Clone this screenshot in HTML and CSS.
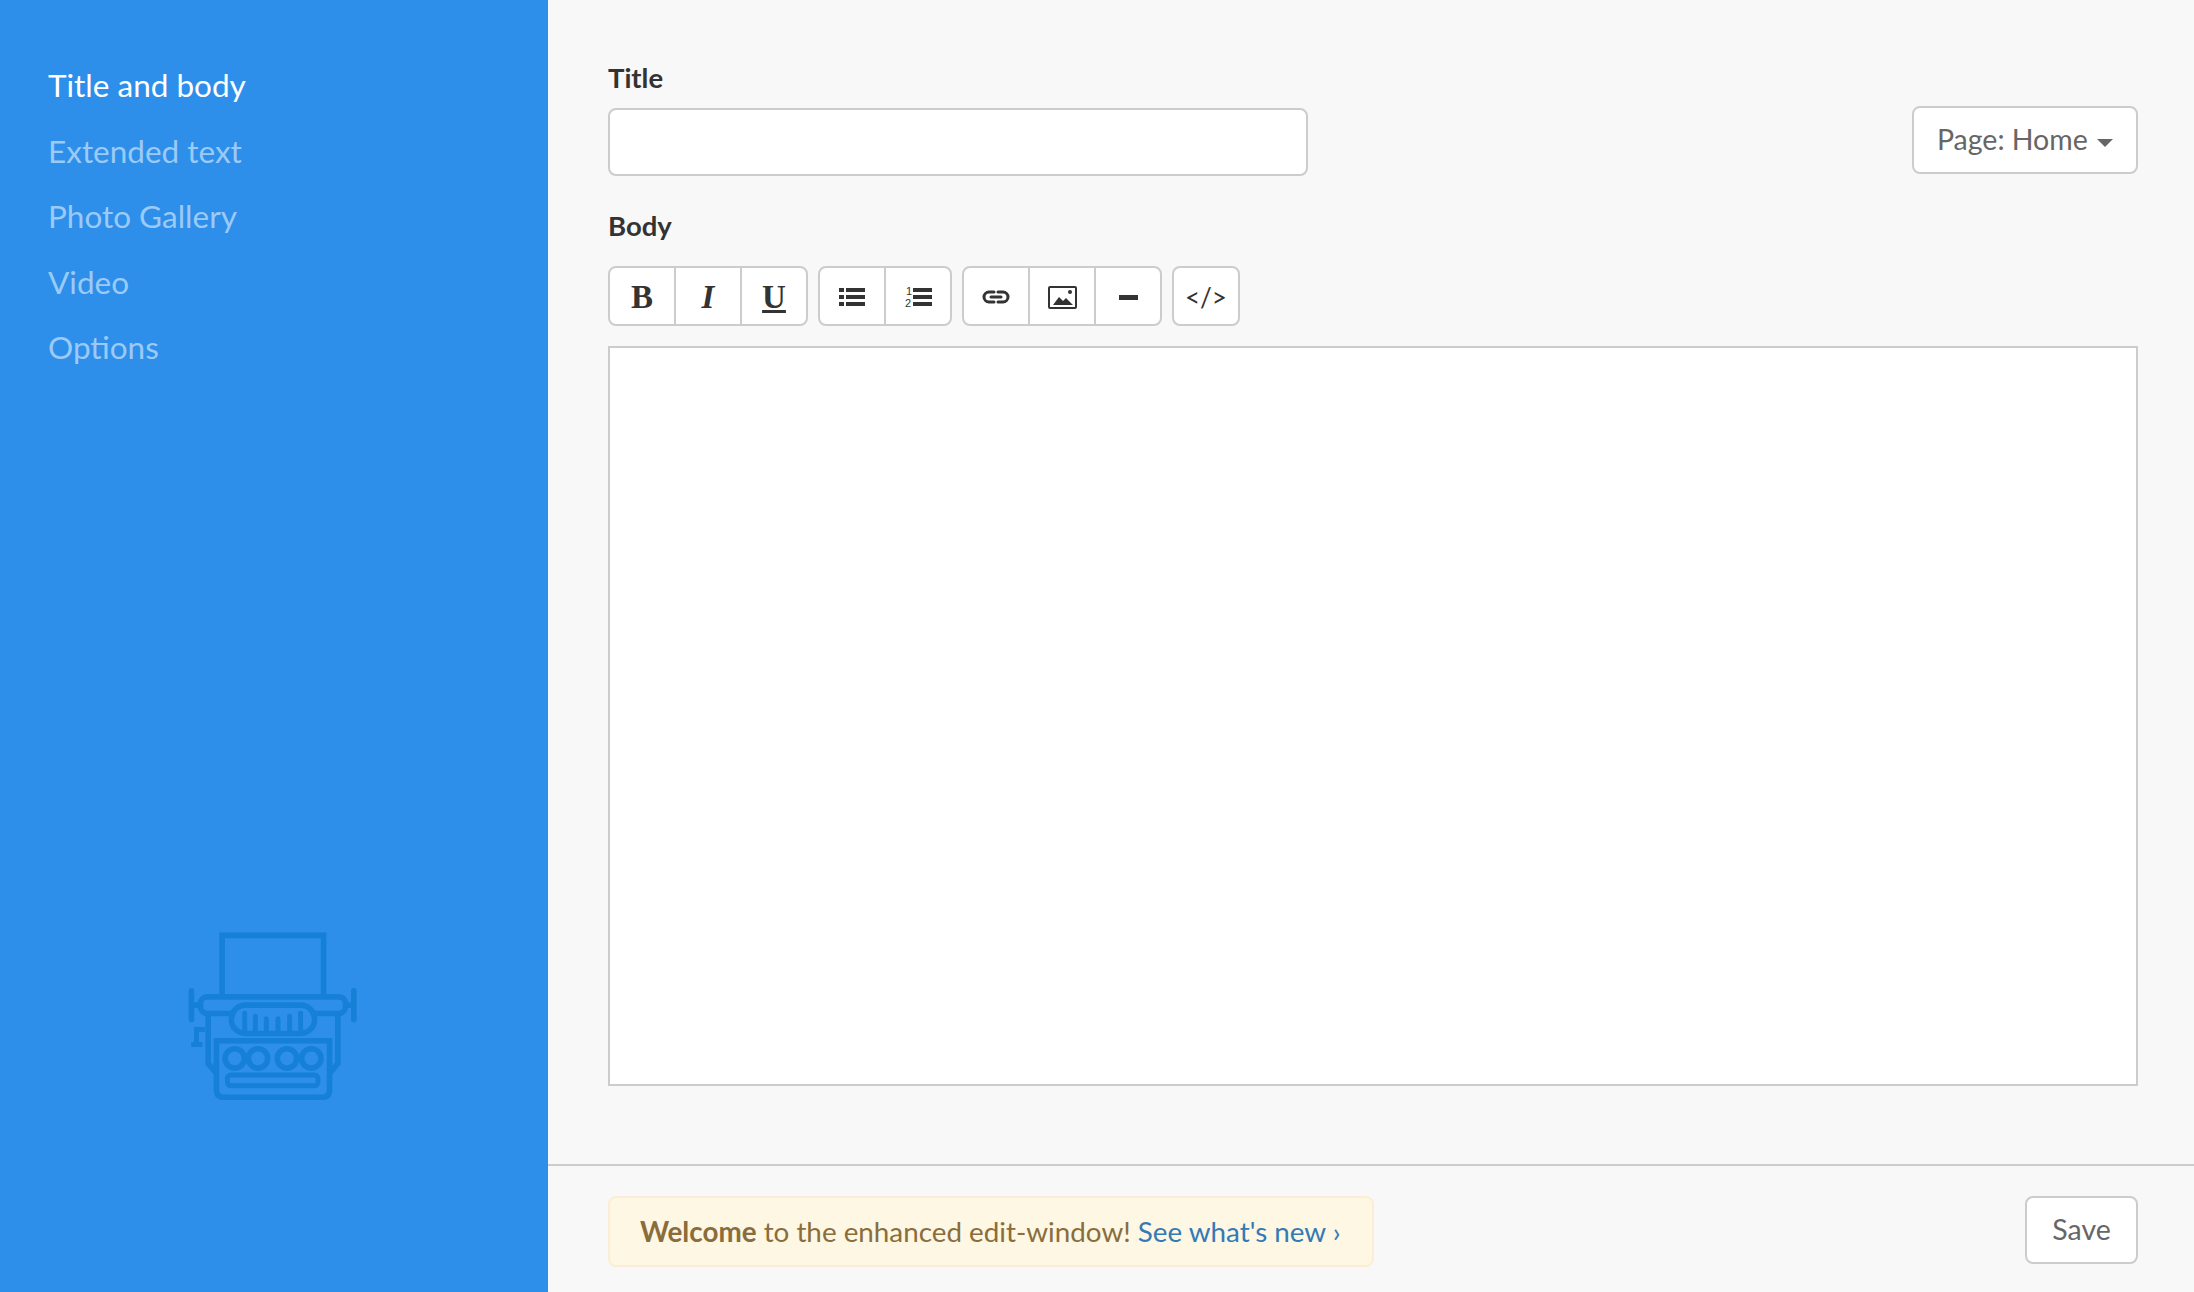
FILE: index.html
```html
<!DOCTYPE html>
<html>

<head>
    <title>Edit</title>
    <link rel="stylesheet" href="styles.css">
</head>

<body>
    <aside class="sidebar">
        <nav class="side-nav">
            <a class="side-link active" href="#">Title and body</a>
            <a class="side-link" href="#">Extended text</a>
            <a class="side-link" href="#">Photo Gallery</a>
            <a class="side-link" href="#">Video</a>
            <a class="side-link" href="#">Options</a>
        </nav>
        <svg class="typewriter" viewBox="85 65 507 505" width="169" height="168" fill="none" stroke="#1580d6" stroke-width="17">
            <path d="M187 255V75H492V255" />
            <rect x="122" y="260" width="436" height="50" rx="20" />
            <path d="M95 242V328M583 242V328" stroke-linecap="round" />
            <path d="M95 285H122M558 285H583" />
            <path d="M145 310V460L170 490M535 310V460L510 490" />
            <path d="M135 358H110V403M94 403H128" stroke-width="15" />
            <rect x="215" y="285" width="250" height="85" rx="42" fill="#2d8fea" />
            <path d="M255 309V366M287 318V366M320 326V366M355 326V366M390 318V366M423 309V366" stroke-width="15" stroke-linecap="round" />
            <path d="M170 392H510V540Q510 562 488 562H192Q170 562 170 540Z" fill="#2d8fea" />
            <circle cx="225" cy="445" r="29" />
            <circle cx="295" cy="445" r="29" />
            <circle cx="382" cy="445" r="29" />
            <circle cx="455" cy="445" r="29" />
            <rect x="203" y="495" width="272" height="32" rx="10" stroke-width="15" />
        </svg>
    </aside>

    <main class="main">
        <section class="content">
            <div class="top-row">
                <div class="title-field">
                    <label class="field-label" for="title">Title</label>
                    <input id="title" class="title-input" type="text" />
                </div>
                <button class="btn page-btn">Page: Home <span class="caret"></span></button>
            </div>

            <label class="field-label body-label" for="body">Body</label>
            <div class="toolbar">
                <div class="tool-group">
                    <button class="tool tool-b">B</button>
                    <button class="tool tool-i">I</button>
                    <button class="tool tool-u">U</button>
                </div>
                <div class="tool-group">
                    <button class="tool" title="Bullets">
                        <svg width="26" height="20" viewBox="0 0 26 20" fill="#333">
                            <path d="M0 1h5v4H0zM0 8h5v4H0zM0 15h5v4H0zM7 1h19v4H7zM7 8h19v4H7zM7 15h19v4H7z" />
                        </svg>
                    </button>
                    <button class="tool" title="Numbers">
                        <svg width="27" height="22" viewBox="0 0 27 22" fill="#333">
                            <text class="num" x="1" y="9">1</text>
                            <text class="num" x="0" y="21">2</text>
                            <path d="M8 2h19v4H8zM8 9h19v4H8zM8 16h19v4H8z" />
                        </svg>
                    </button>
                </div>
                <div class="tool-group">
                    <button class="tool" title="Link">
                        <svg width="28" height="14" viewBox="0 0 28 14" fill="none" stroke="#333" stroke-width="3" stroke-linecap="round">
                            <path d="M12 2H7a5 5 0 0 0 0 10h5M16 2h5a5 5 0 0 1 0 10h-5M9 7h10" />
                        </svg>
                    </button>
                    <button class="tool" title="Image">
                        <svg width="29" height="23" viewBox="0 0 29 23">
                            <rect x="1" y="1" width="27" height="21" rx="1" fill="none" stroke="#333" stroke-width="2" />
                            <path d="M5 19l6-8 4 4 3-3 7 7z" fill="#333" />
                            <circle cx="22" cy="6" r="2" fill="#333" />
                        </svg>
                    </button>
                    <button class="tool" title="Rule">
                        <span class="rule-icon"></span>
                    </button>
                </div>
                <div class="tool-group">
                    <button class="tool tool-code">&lt;/&gt;</button>
                </div>
            </div>
            <textarea id="body" class="body-input"></textarea>
        </section>

        <footer class="footer">
            <div class="notice"><b>Welcome</b> to the enhanced edit-window! <a href="#">See what's new ›</a></div>
            <button class="btn save-btn">Save</button>
        </footer>
    </main>
</body>

</html>
```

FILE: styles.css
```css
html {
    --blue: #2d8fea;
    --line: #cccccc;
}

* {
    box-sizing: border-box;
}

body {
    margin: 0;
    height: 1292px;
    display: flex;
    overflow: hidden;
    background: #f8f8f8;
    color: #333;
    font-family: "Lato", "Liberation Sans", sans-serif;
}

.sidebar {
    width: 548px;
    flex-shrink: 0;
    display: flex;
    flex-direction: column;
    padding: 53px 0 192px 48px;
    background: var(--blue);
}

.side-nav {
    display: flex;
    flex-direction: column;
}

.side-link {
    height: 65.5px;
    line-height: 65.5px;
    font-size: 31.5px;
    color: #9ccaf6;
    text-decoration: none;
}

.side-link.active {
    color: #fff;
}

.typewriter {
    margin-top: auto;
    margin-left: 140px;
}

.main {
    flex: 1;
    display: flex;
    flex-direction: column;
}

.content {
    height: 1164px;
    padding: 60px 56px 0 60px;
}

.top-row {
    display: flex;
    justify-content: space-between;
}

.title-field {
    width: 700px;
}

.field-label {
    display: block;
    height: 36px;
    line-height: 36px;
    font-size: 27.5px;
    font-weight: 700;
}

.title-input {
    display: block;
    width: 100%;
    height: 68px;
    margin-top: 12px;
    border: 2px solid var(--line);
    border-radius: 8px;
    background: #fff;
}

.btn {
    height: 68px;
    padding: 0 0 2px;
    border: 2px solid var(--line);
    border-radius: 8px;
    background: #fff;
    color: #666;
    font-family: inherit;
    font-size: 28.5px;
}

.page-btn {
    width: 226px;
    margin-top: 46px;
}

.caret {
    display: inline-block;
    margin-left: 2px;
    vertical-align: 3px;
    border-top: 8px solid #666;
    border-left: 8px solid transparent;
    border-right: 8px solid transparent;
}

.body-label {
    margin-top: 32px;
}

.toolbar {
    display: flex;
    gap: 10px;
    margin-top: 22px;
}

.tool-group {
    display: flex;
    height: 60px;
    border: 2px solid var(--line);
    border-radius: 8px;
    background: #fff;
}

.tool {
    width: 66px;
    padding: 2px 0 0;
    display: flex;
    align-items: center;
    justify-content: center;
    border: 0;
    border-left: 2px solid var(--line);
    background: none;
    color: #333;
}

.tool:first-child {
    width: 64px;
    border-left: 0;
}

.tool-b,
.tool-i,
.tool-u {
    font-family: "Liberation Serif", serif;
    font-size: 33px;
    font-weight: 700;
}

.tool-i {
    font-style: italic;
}

.tool-u {
    text-decoration: underline;
}

.tool-code {
    font-family: "Lato", sans-serif;
    font-size: 26px;
}

.num {
    font-family: "Liberation Sans", sans-serif;
    font-size: 11px;
}

.rule-icon {
    width: 19px;
    height: 5px;
    background: #333;
}

.body-input {
    display: block;
    width: 100%;
    height: 740px;
    margin-top: 20px;
    border: 2px solid var(--line);
    border-radius: 0;
    background: #fff;
    resize: none;
}

.footer {
    flex: 1;
    display: flex;
    justify-content: space-between;
    align-items: flex-start;
    padding: 30px 56px 0 60px;
    border-top: 2px solid var(--line);
}

.notice {
    width: 766px;
    height: 71px;
    padding: 0 30px;
    line-height: 67px;
    border: 2px solid #fbeed5;
    border-radius: 8px;
    background: #fdf7e3;
    color: #8a6d3b;
    font-size: 27.8px;
    white-space: nowrap;
}

.notice a {
    color: #337ab7;
    text-decoration: none;
}

.save-btn {
    width: 113px;
}
```
